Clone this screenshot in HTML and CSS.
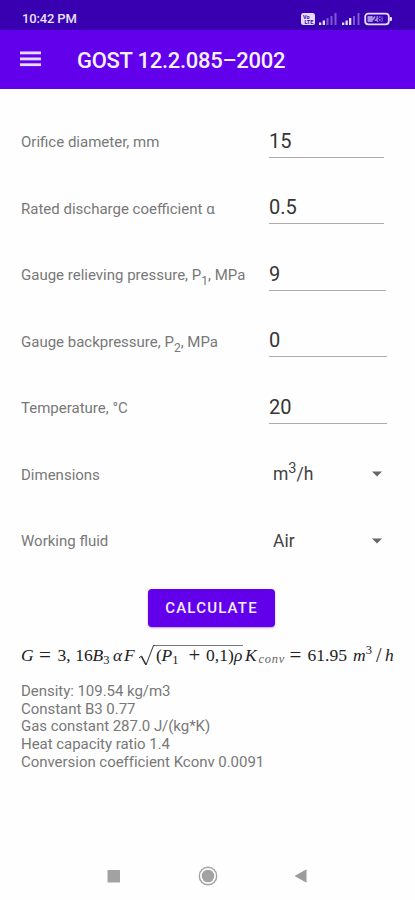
FILE: index.html
```html
<!DOCTYPE html>
<html lang="en">
<head>
<meta charset="utf-8">
<title>GOST 12.2.085–2002</title>
<link rel="stylesheet" href="styles.css">
</head>
<body>
<div class="statusbar">
  <span class="clock">10:42 PM</span>
  <svg class="status-icons" width="94" height="16" viewBox="0 0 94 16">
    <rect x="1" y="2" width="14" height="12" rx="2.5" fill="#e4dcfa"/>
    <text x="3" y="7.5" class="tiny">Vo</text>
    <text x="4.5" y="13" class="tiny">LTE</text>
    <g fill="#e4dcfa">
      <rect x="19" y="11.500" width="2.300" height="2.500"/>
      <rect x="22.700" y="9.500" width="2.300" height="4.500"/>
      <rect x="42" y="11.500" width="2.300" height="2.500"/>
      <rect x="45.500" y="9.500" width="2.300" height="4.500"/>
      <rect x="49" y="7" width="2.300" height="7"/>
    </g>
    <g fill="#7c58d2">
      <rect x="26.500" y="7" width="2" height="7"/>
      <rect x="30.500" y="5" width="2" height="9"/>
      <rect x="34.500" y="2" width="2" height="12"/>
      <rect x="53" y="5" width="2" height="9"/>
      <rect x="57.500" y="2" width="2" height="12"/>
    </g>
    <rect x="65.200" y="2.700" width="23.600" height="10.600" rx="3" fill="none" stroke="#e4dcfa" stroke-width="1.800"/>
    <rect x="67.500" y="5" width="15" height="6" rx="1" fill="#a793e2"/>
    <rect x="89.500" y="6" width="2.500" height="4" rx="1" fill="#e4dcfa"/>
    <text x="72" y="11.200" class="battery">28</text>
  </svg>
</div>
<header class="appbar">
  <svg class="menu" width="21" height="16" viewBox="0 0 21 16" fill="#e6dbfd">
    <rect y="0.500" width="21" height="2.800"/><rect y="6.500" width="21" height="2.800"/><rect y="12.300" width="21" height="2.800"/>
  </svg>
  <h1>GOST 12.2.085–2002</h1>
</header>
<main>
  <div class="row"><span class="label">Orifice diameter, mm</span><span class="field">15</span></div>
  <div class="row"><span class="label">Rated discharge coefficient α</span><span class="field">0.5</span></div>
  <div class="row"><span class="label">Gauge relieving pressure, P<sub>1</sub>, MPa</span><span class="field mid">9</span></div>
  <div class="row"><span class="label">Gauge backpressure, P<sub>2</sub>, MPa</span><span class="field wide">0</span></div>
  <div class="row"><span class="label">Temperature, °C</span><span class="field wide">20</span></div>
  <div class="row"><span class="label">Dimensions</span><span class="select"><span>m<sup>3</sup>/h</span><svg width="10" height="6" viewBox="0 0 10 6"><path d="M0 .5h10L5 5.500z" fill="#666"/></svg></span></div>
  <div class="row"><span class="label">Working fluid</span><span class="select"><span>Air</span><svg width="10" height="6" viewBox="0 0 10 6"><path d="M0 .5h10L5 5.500z" fill="#666"/></svg></span></div>
  <button class="calc">CALCULATE</button>
  <div class="formula">
    <i class="w-g">G</i><span class="w-eq">=</span><span class="w-316">3<span class="comma">,</span>16</span><i class="w-b">B<sub>3</sub></i><i class="w-a">α</i><i class="w-f">F</i><svg class="root" width="17" height="22" viewBox="0 0 17 22"><path d="M1 13l2.500-2 4.500 9L15.500.5H17" fill="none" stroke="#333" stroke-width="1"/><path d="M3.500 11.500l4.300 8" stroke="#333" stroke-width="1.500"/></svg><span class="radicand"><span class="w-par">(</span><i class="w-p">P<sub>1</sub></i><span class="w-plus">+</span><span class="w-01">0,1)</span><i class="w-rho">ρ</i></span><i class="w-k">K</i><i class="conv">conv</i><span class="w-eq2">=</span><span class="w-num">61.95</span><i class="w-m">m<sup>3</sup></i><span class="w-sl">/</span><i>h</i>
  </div>
  <div class="results">
    <div>Density: 109.54 kg/m3</div>
    <div>Constant B3 0.77</div>
    <div>Gas constant 287.0 J/(kg*K)</div>
    <div>Heat capacity ratio 1.4</div>
    <div>Conversion coefficient Kconv 0.0091</div>
  </div>
</main>
<nav class="navbar">
  <svg width="14" height="20" viewBox="0 0 14 20"><rect x=".5" y="4" width="12.500" height="12.500" rx=".5" fill="#a2a2a2"/></svg>
  <svg width="20" height="20" viewBox="0 0 20 20"><circle cx="10" cy="10" r="8.700" fill="none" stroke="#a2a2a2" stroke-width="1.400"/><circle cx="10" cy="10" r="6.300" fill="#a2a2a2"/></svg>
  <svg width="14" height="20" viewBox="0 0 14 20"><path d="M.5 10L12.500 3.200v13.600z" fill="#9c9c9c"/></svg>
</nav>
</body>
</html>
```

FILE: styles.css
```css
* { box-sizing: border-box; }
body {
  margin: 0;
  width: 415px;
  height: 900px;
  display: flex;
  flex-direction: column;
  background: #fefefe;
  font-family: Roboto, sans-serif;
  overflow: hidden;
}
.statusbar {
  height: 30px;
  background: #3800b1;
  display: flex;
  justify-content: space-between;
  padding: 11px 21px 0 22px;
  color: #e9e2fb;
}
.clock { font-size: 13px; font-weight: 500; line-height: 16px; letter-spacing: -0.15px; }
.tiny { font: 700 5.5px Roboto, sans-serif; fill: #3800b1; }
.battery { font: 700 9px Roboto, sans-serif; fill: #3800b1; }
.appbar {
  height: 58.5px;
  background: #6200ec;
  display: flex;
  align-items: center;
  padding-left: 20px;
}
.menu { margin-right: 36px; }
h1 { margin: 3px 0 0; font-size: 22px; font-weight: 500; color: #f7f2ff; line-height: 26px; white-space: nowrap; letter-spacing: -0.28px; }
main { padding: 20px 0 0 21px; display: flex; flex-direction: column; flex: 1; }
.row { height: 66.5px; display: flex; align-items: center; flex: none; }
.label { width: 248px; padding-top: 1px; font-size: 15px; line-height: 20px; color: #787878; white-space: nowrap; }
sub, sup { line-height: 0; }
.label sub { font-size: 12px; vertical-align: -5px; }
.field {
  width: 115px;
  height: 32px;
  border-bottom: 1.5px solid #acacac;
  font-size: 20px;
  line-height: 31px;
  color: #353535;
}
.mid { width: 117px; }
.wide { width: 118px; }
.select { width: 113px; padding-left: 4px; display: flex; justify-content: space-between; align-items: center; font-size: 17.5px; color: #424242; }
.select sup { font-size: 14.5px; vertical-align: 7px; }
.calc {
  width: 127px;
  height: 38px;
  margin: 14.5px 0 0 127px;
  flex: none;
  padding: 0;
  border: 0;
  border-radius: 4px;
  background: #6200ec;
  color: #f4edff;
  font: 500 15px Roboto, sans-serif;
  letter-spacing: 1.2px;
  box-shadow: 0 1px 2px #b7a0dd;
}
.formula {
  height: 39px;
  margin-top: 17.5px;
  display: flex;
  flex: none;
  font: 17.5px/22px "Liberation Serif", serif;
  color: #222;
  white-space: nowrap;
}
.formula > *, .radicand > * { flex: none; }
.formula sub { font-size: 12.5px; font-style: normal; vertical-align: -3px; }
.formula sup { font-size: 12.5px; font-style: normal; vertical-align: 7px; }
.w-g { width: 18px; }
.w-eq { width: 18.5px; font-size: 21px; }
.w-316 { width: 35px; }
.comma { margin-right: 4.5px; }
.w-b { width: 20.5px; }
.w-a { width: 11px; }
.w-f { width: 14px; }
.root { margin-top: 1px; }
.radicand { display: flex; height: 22px; position: relative; }
.radicand::before { content: ""; position: absolute; left: 0; right: 2px; top: 1px; height: 1px; background: #777; }
.w-par { width: 6.5px; padding-left: 1px; }
.w-p { width: 27px; }
.w-plus { width: 17.5px; font-size: 21px; }
.w-01 { width: 28px; }
.w-rho { width: 11px; }
.w-k { width: 13.5px; }
.formula .conv { width: 31px; font-size: 12.5px; letter-spacing: 0.7px; padding-top: 4px; color: #666; }
.w-eq2 { width: 18px; font-size: 21px; }
.w-num { width: 45.5px; }
.w-m { width: 23px; }
.w-sl { width: 9px; font-size: 20px; }
.results { font-size: 15px; line-height: 17.7px; color: #787878; letter-spacing: -0.04px; white-space: nowrap; }
.navbar {
  height: 50px;
  flex: none;
  display: flex;
  align-items: center;
  justify-content: space-between;
  padding: 1px 107px 0 107px;
}
```
